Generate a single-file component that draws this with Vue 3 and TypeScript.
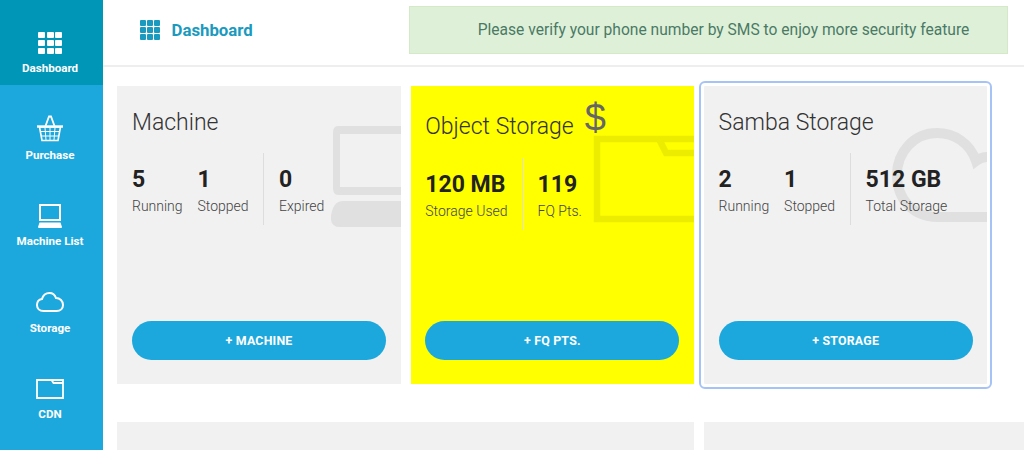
<script setup lang="ts">
interface Stat { value: string; label: string; split?: boolean }
interface Card { title: string; action: string; kind: string; stats: Stat[] }
const nav = [
  { label: 'Dashboard', icon: 'grid', active: true },
  { label: 'Purchase', icon: 'basket', active: false },
  { label: 'Machine List', icon: 'laptop', active: false },
  { label: 'Storage', icon: 'cloud', active: false },
  { label: 'CDN', icon: 'folder', active: false },
]
const cards: Card[] = [
  { title: 'Machine', action: '+ MACHINE', kind: 'machine', stats: [
    { value: '5', label: 'Running' }, { value: '1', label: 'Stopped' }, { value: '0', label: 'Expired', split: true } ] },
  { title: 'Object Storage', action: '+ FQ PTS.', kind: 'object', stats: [
    { value: '120 MB', label: 'Storage Used' }, { value: '119', label: 'FQ Pts.', split: true } ] },
  { title: 'Samba Storage', action: '+ STORAGE', kind: 'samba', stats: [
    { value: '2', label: 'Running' }, { value: '1', label: 'Stopped' }, { value: '512 GB', label: 'Total Storage', split: true } ] },
]
const dots = [0, 1, 2, 3, 4, 5, 6, 7, 8]
</script>

<template>
  <div class="page">
    <aside class="side">
      <a v-for="n in nav" :key="n.label" class="nav" :class="{ active: n.active }">
        <div v-if="n.icon === 'grid'" class="grid"><i v-for="d in dots" :key="d"></i></div>
        <svg v-else-if="n.icon === 'basket'" class="ic-basket" width="28" height="27" viewBox="0 0 28 27" fill="none" stroke="#fff">
          <path d="M9.5 11 L13 1.5 H15 L18.5 11" stroke-width="1.8" />
          <path d="M1 11.5 H27" stroke-width="2.4" />
          <path d="M3.5 12 L6 25.5 H22 L24.5 12 Z" stroke-width="1.6" />
          <path d="M9 13 L10 25 M14 13 V25 M19 13 L18 25 M4.5 16.5 H23.5 M5.2 21 H22.8" stroke-width="1" />
        </svg>
        <svg v-else-if="n.icon === 'laptop'" class="ic-laptop" width="26" height="24" viewBox="0 0 26 24" fill="none" stroke="#fff">
          <rect x="3" y="1" width="20" height="15" stroke-width="2" />
          <path d="M2.5 18.5 H23.5 L25 23 Q25 24 24 24 H2 Q1 24 1 23 Z" fill="#fff" stroke="none" />
        </svg>
        <svg v-else-if="n.icon === 'cloud'" class="ic-cloud" width="28" height="20" viewBox="0 0 28 20" fill="none" stroke="#fff" stroke-width="2">
          <path d="M7.5 19 C3.5 19 1 16.5 1 13 C1 10 3 7.5 6 7 C7 3.5 10 1 13.5 1 C16.5 1 19 3 20 6 C24 6 27 9 27 13 C27 16.5 24.5 19 20.5 19 Z" />
        </svg>
        <svg v-else class="ic-folder" width="28" height="20" viewBox="0 0 28 20" fill="none" stroke="#fff" stroke-width="1.8">
          <path d="M1 1 H27 V19 H1 Z" />
          <path d="M15.5 1 L17.5 4 H27" />
        </svg>
        <span>{{ n.label }}</span>
      </a>
    </aside>

    <div class="main">
      <header class="top">
        <div class="crumb">
          <div class="grid small"><i v-for="d in dots" :key="d"></i></div>
          <span>Dashboard</span>
        </div>
        <div class="notice">Please verify your phone number by SMS to enjoy more security feature</div>
      </header>

      <section class="content">
        <div class="cards">
          <article v-for="c in cards" :key="c.title" class="card" :class="c.kind">
            <svg v-if="c.kind === 'machine'" class="bg" width="70" height="102" viewBox="0 0 70 102">
              <path d="M7 0 H70 V8 H9 V61 H70 V69 H7 Q2 69 2 62 V7 Q2 0 7 0 Z" fill="#e0e0e0" />
              <path d="M12 75 H70 V101 H9 Q-1 101 0 90 Q2 75 12 75 Z" fill="#e0e0e0" />
            </svg>
            <svg v-else-if="c.kind === 'object'" class="bg" width="101" height="88" viewBox="0 0 101 88" fill="none" stroke="#ecec00" stroke-width="6.5">
              <path d="M101 4 H4 V84 H101" />
              <path d="M66 4 L73 18 H101" />
            </svg>
            <svg v-else class="bg" width="95" height="94" viewBox="0 0 95 94" fill="none" stroke="#e0e0e0" stroke-width="10">
              <path d="M95 29 C92 29 88 30 84 33 C78 15 62 5 45 5 C22 5 5 24 5 47 C5 72 22 89 45 89 H95" />
            </svg>
            <span v-if="c.kind === 'object'" class="dollar">$</span>
            <h2>{{ c.title }}</h2>
            <div class="stats">
              <div v-for="s in c.stats" :key="s.label" class="stat" :class="{ split: s.split }">
                <b>{{ s.value }}</b>
                <small>{{ s.label }}</small>
              </div>
            </div>
            <button class="action">{{ c.action }}</button>
          </article>
        </div>
        <div class="lower">
          <article class="panel wide"><h3>Quick start</h3></article>
          <article class="panel last"><h3>Summary</h3></article>
        </div>
      </section>
    </div>
  </div>
</template>

<style>
html, body { margin: 0; background: #fff; overflow: hidden; }
</style>

<style scoped>
.page { display: flex; width: 1024px; height: 450px; overflow: hidden; font-family: Roboto, sans-serif; color: #222; }
.side { width: 103px; flex: none; background: #1ca8dd; display: flex; flex-direction: column; }
.nav { height: 86.5px; flex: none; box-sizing: border-box; display: flex; flex-direction: column; align-items: center; justify-content: flex-end; padding: 0 3px 10px 0; gap: 6px; color: #fff; font-size: 11.6px; font-weight: 700; }
.nav.active { background: #0096b8; height: 85px; padding-bottom: 10px; }
.ic-cloud { margin-bottom: 3px; }
.ic-folder { margin-bottom: 2px; }
.grid { display: grid; grid-template-columns: repeat(3, 7px); grid-auto-rows: 6.5px; gap: 1.5px; margin-bottom: 1px; }
.grid i { background: #fff; border-radius: 1px; }
.grid.small { grid-template-columns: repeat(3, 5.5px); grid-auto-rows: 5.5px; gap: 1.5px; margin: 0; }
.grid.small i { background: #1b9ac0; }
.main { flex: 1; min-width: 0; }
.top { box-sizing: border-box; border-bottom: 2px solid #eee; height: 67px; padding: 6px 0 0 37px; display: flex; align-items: flex-start; }
.crumb { width: 269px; height: 48px; display: flex; align-items: center; gap: 12px; color: #1b9ac0; font-size: 16.8px; font-weight: 700; }
.notice { width: 599px; height: 48px; box-sizing: border-box; background: #dff0d8; border: 1px solid #d6e9c6; display: flex; align-items: center; justify-content: center; color: #4a7a66; font-size: 15.6px; padding-left: 30px; white-space: nowrap; }
.content { padding: 19px 0 0 14.4px; }
.cards { display: flex; gap: 10px; }
.card { position: relative; width: 283.3px; height: 297.5px; box-sizing: border-box; background: #f1f1f1; overflow: hidden; padding: 23px 14.6px 0; }
.card h2 { margin: 0; font-weight: 300; font-size: 23px; line-height: 28px; color: #333; position: relative; }
.bg { position: absolute; right: 0; top: 40px; }
.object { background: #ff0; }
.object h2 { margin-top: 4px; }
.object .bg { top: 49px; }
.samba { outline: 2px solid #a6c3f5; outline-offset: 3px; border-radius: 1px; }
.samba .bg { top: 42px; }
.dollar { position: absolute; left: 174px; top: 9px; font-family: "Liberation Sans", sans-serif; font-size: 38px; line-height: 46px; color: #666; }
.stats { position: relative; display: flex; margin-top: 16px; height: 72px; }
.object .stats { margin-top: 17px; }
.stat { display: flex; flex-direction: column; min-width: 65.5px; padding-top: 14px; box-sizing: border-box; }
.stat b { font-size: 23px; line-height: 26px; font-weight: 700; color: #222; }
.stat small { font-size: 14px; line-height: 18px; font-weight: 300; color: #444; margin-top: 4px; }
.stat.split { border-left: 1px solid #ddd; padding-left: 15px; }
.object .stat:first-child { padding-right: 14px; }
.action { position: absolute; left: 14.6px; right: 14.6px; top: 235px; height: 38.5px; border: 0; border-radius: 20px; background: #1ca8dd; color: #fff; font-family: Roboto, sans-serif; font-size: 12.4px; font-weight: 700; letter-spacing: 0.2px; }
.lower { display: flex; gap: 10px; margin-top: 38px; }
.panel { background: #f1f1f1; height: 100px; flex: 1; padding: 25px 15px; box-sizing: border-box; }
.panel.wide { flex: none; width: 576.6px; }
.panel h3 { margin: 0; font-weight: 300; font-size: 23px; color: #333; }
</style>
